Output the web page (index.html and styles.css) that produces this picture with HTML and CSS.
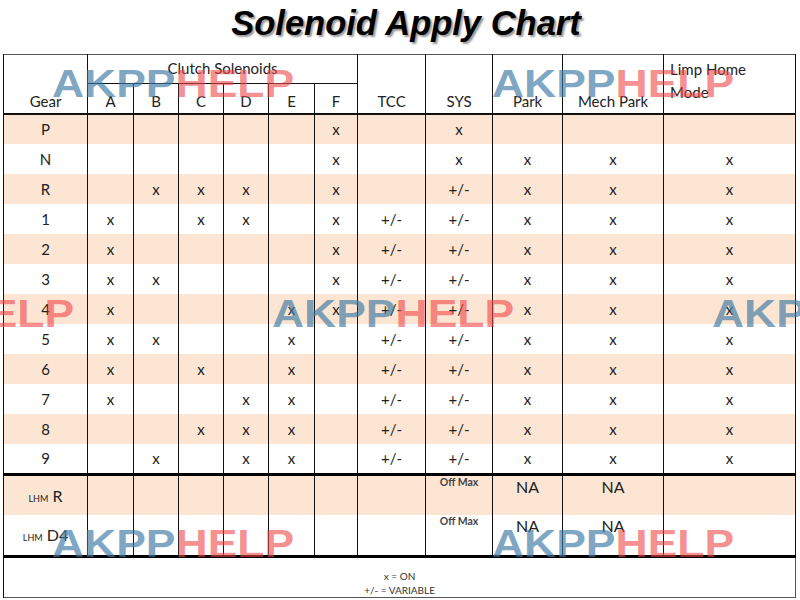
FILE: index.html
```html
<!DOCTYPE html>
<html>
<head>
<meta charset="utf-8">
<link rel="stylesheet" href="styles.css">
</head>
<body>
<div class="page">
  <h1 class="title">Solenoid Apply Chart</h1>
  <table class="chart">
    <colgroup>
      <col class="c-gear"><col class="c-a"><col class="c-b"><col class="c-c"><col class="c-d"><col class="c-e"><col class="c-f">
      <col class="c-tcc"><col class="c-sys"><col class="c-park"><col class="c-mech"><col class="c-limp">
    </colgroup>
    <thead>
      <tr class="h1">
        <th rowspan="2" class="hb">Gear</th>
        <th colspan="6" class="group">Clutch Solenoids</th>
        <th rowspan="2" class="hb">TCC</th>
        <th rowspan="2" class="hb">SYS</th>
        <th rowspan="2" class="hb">Park</th>
        <th rowspan="2" class="hb">Mech Park</th>
        <th rowspan="2" class="limp">Limp Home<br>Mode</th>
      </tr>
      <tr class="h2">
        <th>A</th><th>B</th><th>C</th><th>D</th><th>E</th><th>F</th>
      </tr>
    </thead>
    <tbody>
      <tr class="odd"><td>P</td><td></td><td></td><td></td><td></td><td></td><td>x</td><td></td><td>x</td><td></td><td></td><td></td></tr>
      <tr><td>N</td><td></td><td></td><td></td><td></td><td></td><td>x</td><td></td><td>x</td><td>x</td><td>x</td><td>x</td></tr>
      <tr class="odd"><td>R</td><td></td><td>x</td><td>x</td><td>x</td><td></td><td>x</td><td></td><td>+/-</td><td>x</td><td>x</td><td>x</td></tr>
      <tr><td>1</td><td>x</td><td></td><td>x</td><td>x</td><td></td><td>x</td><td>+/-</td><td>+/-</td><td>x</td><td>x</td><td>x</td></tr>
      <tr class="odd"><td>2</td><td>x</td><td></td><td></td><td></td><td></td><td>x</td><td>+/-</td><td>+/-</td><td>x</td><td>x</td><td>x</td></tr>
      <tr><td>3</td><td>x</td><td>x</td><td></td><td></td><td></td><td>x</td><td>+/-</td><td>+/-</td><td>x</td><td>x</td><td>x</td></tr>
      <tr class="odd"><td>4</td><td>x</td><td></td><td></td><td></td><td>x</td><td>x</td><td>+/-</td><td>+/-</td><td>x</td><td>x</td><td>x</td></tr>
      <tr><td>5</td><td>x</td><td>x</td><td></td><td></td><td>x</td><td></td><td>+/-</td><td>+/-</td><td>x</td><td>x</td><td>x</td></tr>
      <tr class="odd"><td>6</td><td>x</td><td></td><td>x</td><td></td><td>x</td><td></td><td>+/-</td><td>+/-</td><td>x</td><td>x</td><td>x</td></tr>
      <tr><td>7</td><td>x</td><td></td><td></td><td>x</td><td>x</td><td></td><td>+/-</td><td>+/-</td><td>x</td><td>x</td><td>x</td></tr>
      <tr class="odd"><td>8</td><td></td><td></td><td>x</td><td>x</td><td>x</td><td></td><td>+/-</td><td>+/-</td><td>x</td><td>x</td><td>x</td></tr>
      <tr class="last"><td>9</td><td></td><td>x</td><td></td><td>x</td><td>x</td><td></td><td>+/-</td><td>+/-</td><td>x</td><td>x</td><td>x</td></tr>
      <tr class="odd lhm"><td><span class="small">LHM</span> R</td><td></td><td></td><td></td><td></td><td></td><td></td><td></td><td class="off">Off Max</td><td class="na">NA</td><td class="na">NA</td><td></td></tr>
      <tr class="lhm lhm-last"><td><span class="small">LHM</span> D4</td><td></td><td></td><td></td><td></td><td></td><td></td><td></td><td class="off">Off Max</td><td class="na">NA</td><td class="na">NA</td><td></td></tr>
      <tr class="legend"><td colspan="12">x = ON<br>+/- = VARIABLE</td></tr>
    </tbody>
  </table>
  <div class="marks" aria-hidden="true">
    <div class="mark m1"><span class="blue">AKPP</span><span class="red">HELP</span></div>
    <div class="mark m2"><span class="blue">AKPP</span><span class="red">HELP</span></div>
    <div class="mark m3"><span class="blue">AKPP</span><span class="red">HELP</span></div>
    <div class="mark m4"><span class="blue">AKPP</span><span class="red">HELP</span></div>
    <div class="mark m5"><span class="blue">AKPP</span><span class="red">HELP</span></div>
    <div class="mark m6"><span class="blue">AKPP</span><span class="red">HELP</span></div>
    <div class="mark m7"><span class="blue">AKPP</span><span class="red">HELP</span></div>
  </div>
</div>
</body>
</html>
```

FILE: styles.css
```css
html, body {
  margin: 0;
  padding: 0;
  background: #fff;
}
.page {
  position: relative;
  width: 800px;
  height: 600px;
  overflow: hidden;
  font-family: Lato, "Open Sans", sans-serif;
  color: #222;
}
.title {
  margin: 0;
  height: 54px;
  box-sizing: border-box;
  padding: 4px 0 0 12px;
  text-align: center;
  font-family: "Liberation Sans", Arial, sans-serif;
  font-weight: bold;
  font-style: italic;
  font-size: 34.5px;
  line-height: 38px;
  color: #000;
  text-shadow: 2px 2px 2px #999;
}
.chart {
  margin-left: 3px;
  width: 792px;
  table-layout: fixed;
  border-collapse: collapse;
  border: 1px solid #555;
  font-size: 15px;
}
.c-gear { width: 84px; }
.c-a { width: 46px; }
.c-b { width: 45px; }
.c-c { width: 45px; }
.c-d { width: 45px; }
.c-e { width: 46px; }
.c-f { width: 43px; }
.c-tcc { width: 68px; }
.c-sys { width: 67px; }
.c-park { width: 70px; }
.c-mech { width: 101px; }
.c-limp { width: 132px; }

.chart th, .chart td {
  border-left: 1px solid #111;
  border-right: 1px solid #111;
  padding: 0;
  text-align: center;
  font-weight: normal;
  overflow: hidden;
  white-space: nowrap;
}
.chart thead th { vertical-align: bottom; }
.h1 { height: 29px; }
.h2 { height: 30px; }
.h2 th { border-top: 1px solid #111; padding-bottom: 3px; }
.hb { padding-bottom: 3px !important; }
.group { vertical-align: middle !important; border-bottom: 1px solid #111; padding-bottom: 3px !important; }
.chart th.limp {
  vertical-align: top;
  text-align: left;
  padding: 3px 0 0 6px;
  line-height: 23px;
}
.chart thead tr:last-child th, .chart thead th[rowspan] { border-bottom: 2px solid #111; }

.chart tbody tr { height: 30px; }
.chart tbody td { vertical-align: middle; }
.chart tbody tr.odd td { background: #fde5d3; }
.chart tbody tr.last td { border-bottom: 3px solid #000; height: 29px; }
.chart tbody tr.lhm { height: 41px; }
.chart tbody tr.lhm-last td { border-bottom: 3px solid #000; }
.small { font-size: 9px; }
.lhm td:first-child { font-size: 16px; }
.chart td.off {
  vertical-align: top;
  font-size: 10.5px;
  font-weight: bold;
  color: #444;
  padding-top: 0;
}
.chart td.na {
  vertical-align: top;
  font-size: 16px;
  padding-top: 1px;
}
.chart tr.legend { height: 38px; }
.chart tr.legend td {
  font-size: 10px;
  line-height: 14px;
  vertical-align: top;
  padding-top: 11px;
  border-right: 1px solid #555;
  color: #333;
}

.marks {
  position: absolute;
  inset: 0;
  pointer-events: none;
}
.mark {
  position: absolute;
  font-family: "Liberation Sans", Arial, sans-serif;
  font-weight: bold;
  font-size: 39px;
  line-height: 39px;
  white-space: nowrap;
  transform: scaleX(1.14);
  transform-origin: 0 0;
}
.blue { color: rgba(60, 122, 165, 0.66); }
.red { color: rgba(240, 70, 70, 0.62); }
.m1 { left: 52px; top: 64px; }
.m2 { left: 492px; top: 64px; }
.m3 { left: -168px; top: 294px; }
.m4 { left: 272px; top: 294px; }
.m5 { left: 712px; top: 294px; }
.m6 { left: 52px; top: 524px; }
.m7 { left: 492px; top: 524px; }
```
